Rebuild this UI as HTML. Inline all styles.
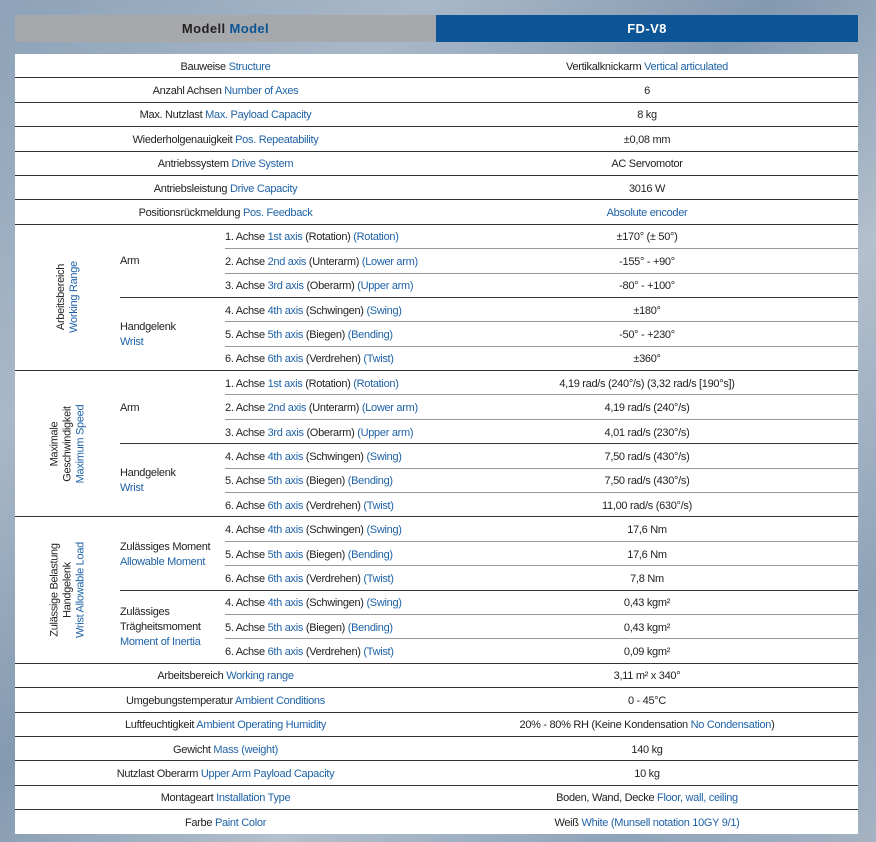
<!DOCTYPE html>
<html><head><meta charset="utf-8"><style>
html,body{margin:0;padding:0;}
body{width:876px;height:842px;overflow:hidden;position:relative;font-family:"Liberation Sans",sans-serif;
background:linear-gradient(135deg,#8da2b8 0%,#a9b8c8 25%,#8399b0 45%,#b3c0cd 65%,#8fa3b9 85%,#a5b3c3 100%);}
.hdr{position:absolute;top:15px;height:27px;line-height:28px;font-weight:bold;font-size:13px;letter-spacing:0.4px;text-align:center;}
.h1{left:15px;width:421px;background:#a6a8ab;color:#222;}
.h2{left:436px;width:422px;background:#0c5596;color:#fff;}
table{position:absolute;left:15px;top:54px;width:843px;border-collapse:collapse;table-layout:fixed;background:#fff;font-size:11px;letter-spacing:-0.3px;color:#222;}
td{height:21.4px;padding:2px 0 0 0;border-bottom:1px solid #333;vertical-align:middle;white-space:nowrap;}
td.c{text-align:center;}
td.ax{border-bottom:1px solid #999;}
td.sub{line-height:15px;}
b{font-weight:normal;color:#1e62a6;}
.g{position:relative;}
.rot{position:absolute;left:50%;top:50%;transform:translate(-50%,-50%) rotate(-90deg);text-align:center;line-height:13px;white-space:nowrap;}
</style></head><body>
<div class="hdr h1">Modell <span style="color:#0c5596">Model</span></div>
<div class="hdr h2">FD-V8</div>
<table>
<colgroup><col style="width:105px"><col style="width:105px"><col style="width:211px"><col style="width:422px"></colgroup>
<tr><td colspan="3" class="c">Bauweise <b>Structure</b></td><td class="c">Vertikalknickarm <b>Vertical articulated</b></td></tr>
<tr><td colspan="3" class="c">Anzahl Achsen <b>Number of Axes</b></td><td class="c">6</td></tr>
<tr><td colspan="3" class="c">Max. Nutzlast <b>Max. Payload Capacity</b></td><td class="c">8 kg</td></tr>
<tr><td colspan="3" class="c">Wiederholgenauigkeit <b>Pos. Repeatability</b></td><td class="c">±0,08 mm</td></tr>
<tr><td colspan="3" class="c">Antriebssystem <b>Drive System</b></td><td class="c">AC Servomotor</td></tr>
<tr><td colspan="3" class="c">Antriebsleistung <b>Drive Capacity</b></td><td class="c">3016 W</td></tr>
<tr><td colspan="3" class="c">Positionsrückmeldung <b>Pos. Feedback</b></td><td class="c"><b>Absolute encoder</b></td></tr>

<tr><td rowspan="6" class="g"><div class="rot">Arbeitsbereich<br><b>Working Range</b></div></td><td rowspan="3" class="sub">Arm</td><td class="ax">1. Achse <b>1st axis</b> (Rotation) <b>(Rotation)</b></td><td class="c ax">±170° (± 50°)</td></tr>
<tr><td class="ax">2. Achse <b>2nd axis</b> (Unterarm) <b>(Lower arm)</b></td><td class="c ax">-155° - +90°</td></tr>
<tr><td>3. Achse <b>3rd axis</b> (Oberarm) <b>(Upper arm)</b></td><td class="c">-80° - +100°</td></tr>
<tr><td rowspan="3" class="sub">Handgelenk<br><b>Wrist</b></td><td class="ax">4. Achse <b>4th axis</b> (Schwingen) <b>(Swing)</b></td><td class="c ax">±180°</td></tr>
<tr><td class="ax">5. Achse <b>5th axis</b> (Biegen) <b>(Bending)</b></td><td class="c ax">-50° - +230°</td></tr>
<tr><td>6. Achse <b>6th axis</b> (Verdrehen) <b>(Twist)</b></td><td class="c">±360°</td></tr>

<tr><td rowspan="6" class="g"><div class="rot">Maximale<br>Geschwindigkeit<br><b>Maximum Speed</b></div></td><td rowspan="3" class="sub">Arm</td><td class="ax">1. Achse <b>1st axis</b> (Rotation) <b>(Rotation)</b></td><td class="c ax">4,19 rad/s (240°/s) (3,32 rad/s [190°s])</td></tr>
<tr><td class="ax">2. Achse <b>2nd axis</b> (Unterarm) <b>(Lower arm)</b></td><td class="c ax">4,19 rad/s (240°/s)</td></tr>
<tr><td>3. Achse <b>3rd axis</b> (Oberarm) <b>(Upper arm)</b></td><td class="c">4,01 rad/s (230°/s)</td></tr>
<tr><td rowspan="3" class="sub">Handgelenk<br><b>Wrist</b></td><td class="ax">4. Achse <b>4th axis</b> (Schwingen) <b>(Swing)</b></td><td class="c ax">7,50 rad/s (430°/s)</td></tr>
<tr><td class="ax">5. Achse <b>5th axis</b> (Biegen) <b>(Bending)</b></td><td class="c ax">7,50 rad/s (430°/s)</td></tr>
<tr><td>6. Achse <b>6th axis</b> (Verdrehen) <b>(Twist)</b></td><td class="c">11,00 rad/s (630°/s)</td></tr>

<tr><td rowspan="6" class="g"><div class="rot">Zulässige Belastung<br>Handgelenk<br><b>Wrist Allowable Load</b></div></td><td rowspan="3" class="sub">Zulässiges Moment<br><b>Allowable Moment</b></td><td class="ax">4. Achse <b>4th axis</b> (Schwingen) <b>(Swing)</b></td><td class="c ax">17,6 Nm</td></tr>
<tr><td class="ax">5. Achse <b>5th axis</b> (Biegen) <b>(Bending)</b></td><td class="c ax">17,6 Nm</td></tr>
<tr><td>6. Achse <b>6th axis</b> (Verdrehen) <b>(Twist)</b></td><td class="c">7,8 Nm</td></tr>
<tr><td rowspan="3" class="sub">Zulässiges<br>Trägheitsmoment<br><b>Moment of Inertia</b></td><td class="ax">4. Achse <b>4th axis</b> (Schwingen) <b>(Swing)</b></td><td class="c ax">0,43 kgm²</td></tr>
<tr><td class="ax">5. Achse <b>5th axis</b> (Biegen) <b>(Bending)</b></td><td class="c ax">0,43 kgm²</td></tr>
<tr><td>6. Achse <b>6th axis</b> (Verdrehen) <b>(Twist)</b></td><td class="c">0,09 kgm²</td></tr>

<tr><td colspan="3" class="c">Arbeitsbereich <b>Working range</b></td><td class="c">3,11 m² x 340°</td></tr>
<tr><td colspan="3" class="c">Umgebungstemperatur <b>Ambient Conditions</b></td><td class="c">0 - 45°C</td></tr>
<tr><td colspan="3" class="c">Luftfeuchtigkeit <b>Ambient Operating Humidity</b></td><td class="c">20% - 80% RH (Keine Kondensation <b>No Condensation</b>)</td></tr>
<tr><td colspan="3" class="c">Gewicht <b>Mass (weight)</b></td><td class="c">140 kg</td></tr>
<tr><td colspan="3" class="c">Nutzlast Oberarm <b>Upper Arm Payload Capacity</b></td><td class="c">10 kg</td></tr>
<tr><td colspan="3" class="c">Montageart <b>Installation Type</b></td><td class="c">Boden, Wand, Decke <b>Floor, wall, ceiling</b></td></tr>
<tr><td colspan="3" class="c" style="border-bottom:none">Farbe <b>Paint Color</b></td><td class="c" style="border-bottom:none">Weiß <b>White (Munsell notation 10GY 9/1)</b></td></tr>
</table>
</body></html>
